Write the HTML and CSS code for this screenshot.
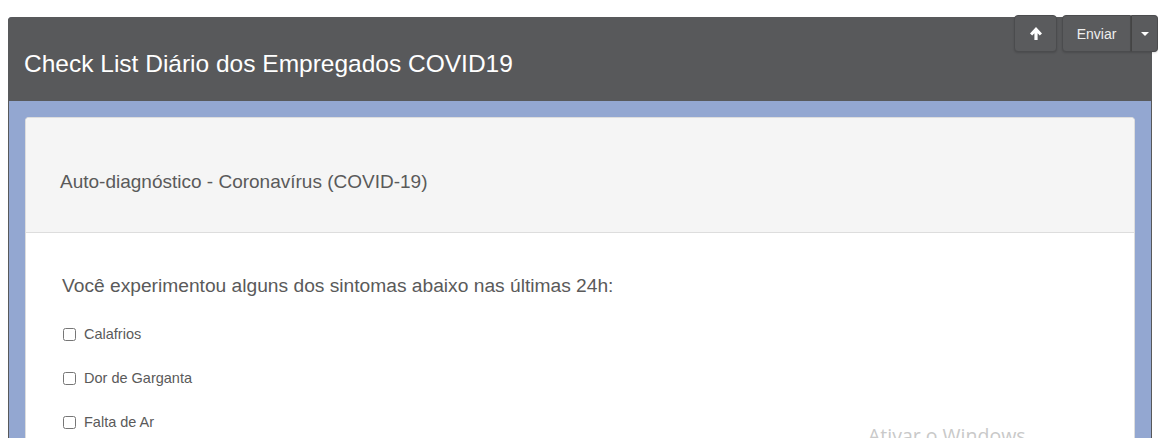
FILE: index.html
```html
<!DOCTYPE html>
<html lang="pt">
<head>
    <meta charset="UTF-8">
    <meta name="viewport" content="width=device-width, initial-scale=1.0">
    <title>Check List Diário dos Empregados COVID19</title>
    <link rel="stylesheet" href="styles.css">
</head>
<body>
    <div class="page">
        <div class="panel">
            <div class="panel-header">
                <h1>Check List Diário dos Empregados COVID19</h1>
            </div>
            <div class="panel-body">
                <div class="card">
                    <div class="card-header">Auto-diagnóstico - Coronavírus (COVID-19)</div>
                    <div class="card-body">
                        <p class="question">Você experimentou alguns dos sintomas abaixo nas últimas 24h:</p>
                        <label class="check"><input type="checkbox"> Calafrios</label>
                        <label class="check"><input type="checkbox"> Dor de Garganta</label>
                        <label class="check"><input type="checkbox"> Falta de Ar</label>
                    </div>
                </div>
            </div>
        </div>

        <div class="toolbar">
            <button class="btn btn-up" type="button">
                <svg width="14" height="15" viewBox="0 0 14 15"><path d="M7 1 L13 7.5 L10.8 9.6 L8.6 7.2 L8.6 14 L5.4 14 L5.4 7.2 L3.2 9.6 L1 7.5 Z" fill="#fff"/></svg>
            </button>
            <div class="btn-group">
                <button class="btn btn-send" type="button">Enviar</button>
                <button class="btn btn-caret" type="button"><span class="caret"></span></button>
            </div>
        </div>

        <div class="watermark">Ativar o Windows</div>
    </div>
</body>
</html>
```

FILE: styles.css
```css
body {
    margin: 0;
    font-family: "Liberation Sans", Arial, sans-serif;
    background: #fff;
    overflow: hidden;
}
.page {
    position: relative;
    padding: 17px 6px 0 8px;
    height: 438px;
    box-sizing: border-box;
}
.panel {
    border: 1px solid #58595b;
    border-top: none;
    border-radius: 4px 4px 0 0;
    background: #93a7d1;
    height: 100%;
}
.panel-header {
    background: #58595b;
    height: 84px;
    border-radius: 4px 4px 0 0;
    display: flex;
    align-items: center;
    padding: 0 16px;
    margin: 0 -1px;
}
.panel-header h1 {
    margin: 10px 0 0;
    font-size: 24.5px;
    font-weight: normal;
    color: #fff;
}
.panel-body {
    padding: 16px 16px 0;
}
.card {
    background: #fff;
    border: 1px solid #ddd;
    border-bottom: none;
    border-radius: 4px 4px 0 0;
    height: 330px;
}
.card-header {
    background: #f5f5f5;
    height: 115px;
    box-sizing: border-box;
    padding: 14px 34px 0;
    border-bottom: 1px solid #ddd;
    border-radius: 4px 4px 0 0;
    display: flex;
    align-items: center;
    font-size: 19px;
    color: #5a5a5a;
}
.card-body {
    padding: 42px 36px 0;
    color: #5a5a5a;
}
.question {
    margin: 0 0 15px;
    font-size: 19.2px;
}
.check {
    display: flex;
    align-items: center;
    font-size: 14.5px;
    height: 44px;
}
.check input {
    width: 13px;
    height: 13px;
    margin: 0 8px 0 1px;
}
.toolbar {
    position: absolute;
    top: 15px;
    right: 0;
    display: flex;
    gap: 5px;
}
.btn {
    background: #5a5b5d;
    border: 1px solid #4b4c4e;
    color: #fff;
    height: 37px;
    font-family: "Liberation Sans", Arial, sans-serif;
    font-size: 14px;
    cursor: pointer;
    box-shadow: 0 1px 2px rgba(0,0,0,0.15);
}
.btn-up {
    width: 43px;
    border-radius: 4px;
    display: flex;
    align-items: center;
    justify-content: center;
}
.btn-group {
    display: flex;
}
.btn-send {
    width: 69px;
    border-radius: 4px 0 0 4px;
    color: #eee;
}
.btn-caret {
    width: 27px;
    border-left: 1px solid #444;
    border-radius: 0 4px 4px 0;
    display: flex;
    align-items: center;
    justify-content: center;
}
.caret {
    width: 0;
    height: 0;
    border-left: 4px solid transparent;
    border-right: 4px solid transparent;
    border-top: 4px solid #fff;
}
.watermark {
    position: absolute;
    left: 868px;
    top: 422px;
    font-family: "Open Sans", "DejaVu Sans", sans-serif;
    font-size: 19.5px;
    color: #c9c9c9;
}
```
